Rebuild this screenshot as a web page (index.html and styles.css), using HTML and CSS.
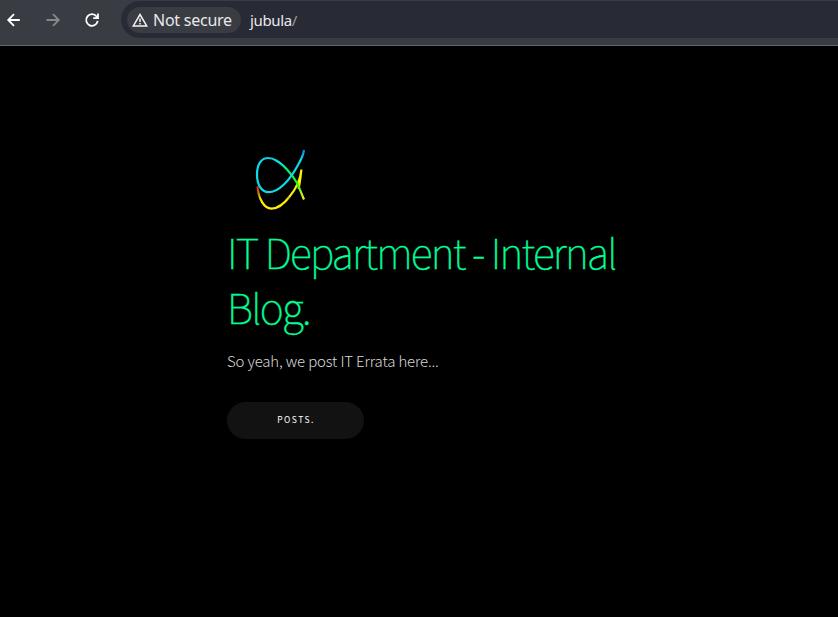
FILE: index.html
```html
<!DOCTYPE html>
<html lang="en">
<head>
<meta charset="utf-8">
<title>IT Department - Internal Blog.</title>
<link rel="stylesheet" href="styles.css">
</head>
<body>
<header class="toolbar">
  <nav class="nav">
    <svg class="icon" viewBox="0 0 16 16"><path d="M13.8 8H2.5M8 2.2 2.2 8 8 13.8"/></svg>
    <svg class="icon icon-off" viewBox="0 0 16 16"><path d="M1.5 8h12M8 2.2 13.8 8 8 13.8"/></svg>
    <svg class="icon" viewBox="0 0 16 16"><path d="M13.7 8.9A5.8 5.8 0 1 1 12.6 4.5L13.5 6M14 1.6V6.2H9.2"/></svg>
  </nav>
  <div class="address">
    <div class="chip">
      <svg class="warn" viewBox="0 0 16 14"><path d="M8 1.5 14.7 12.9H1.3Z"/><path d="M8 5.6v3.3M8 10v1.5"/></svg>
      <span class="chip-text">Not secure</span>
    </div>
    <span class="url">jubula<span class="slash">/</span></span>
  </div>
</header>
<main class="page">
  <svg class="logo" viewBox="0 0 80 80" width="80" height="80">
    <defs>
      <linearGradient id="tail" gradientUnits="userSpaceOnUse" x1="36" y1="22" x2="64" y2="58">
        <stop offset="0" stop-color="#08e5f0"/><stop offset=".25" stop-color="#00f080"/><stop offset=".65" stop-color="#18f818"/><stop offset="1" stop-color="#f4f410"/>
      </linearGradient>
      <linearGradient id="bowl" gradientUnits="userSpaceOnUse" x1="0" y1="46" x2="0" y2="60">
        <stop offset="0" stop-color="#c80c00"/><stop offset=".6" stop-color="#d88c10"/><stop offset="1" stop-color="#fff200"/>
      </linearGradient>
      <linearGradient id="tip" gradientUnits="userSpaceOnUse" x1="0" y1="8" x2="0" y2="20">
        <stop offset="0" stop-color="#1674cc"/><stop offset="1" stop-color="#08dce8"/>
      </linearGradient>
    </defs>
    <path stroke="url(#bowl)" d="M17.5 46C18.5 59 24 68.6 31.5 68.6C38 68.6 44 64 50 56"/>
    <path stroke="#fff200" d="M49.5 56.6C55 50 60.5 41 61.4 29.5M61.4 29.5C60.5 38 59.5 45 58.5 49"/>
    <path stroke="url(#tail)" d="M36 20.5C43 24 52 34 57 43C60 49 61.5 54 64 59.5"/>
    <path stroke="url(#tip)" d="M64 10C63.3 15 61 20 58 25C50 40 39 52.2 28.5 52.2C21 52.2 17 44 17 34.5C17 25 21 18 28 18C31 18 34 19 36.5 20.6"/>
  </svg>
  <h1 class="title">IT Department - Internal Blog.</h1>
  <p class="lead">So yeah, we post IT Errata here...</p>
  <a class="button" href="#">Posts.</a>
</main>
</body>
</html>
```
FILE: styles.css
```css
* { box-sizing: border-box; }
body { margin: 0; min-height: 617px; background: #000; overflow: hidden; }
.toolbar {
  display: flex;
  height: 46px;
  padding-top: 1px;
  background: #3a3c43;
  border-bottom: 1px solid #66676b;
}
.nav { display: flex; gap: 23px; width: 121px; padding: 11px 0 0 6px; }
.icon { width: 16px; height: 16px; fill: none; stroke: #fff; stroke-width: 1.8; }
.icon-off { stroke: #87888b; }
.address {
  display: flex;
  align-items: center;
  flex: 1;
  height: 37px;
  padding-left: 6px;
  border-radius: 19px 0 0 19px;
  background: #282a35;
  font: 16px/26px "Noto Sans", sans-serif;
  color: #e8e8ea;
}
.chip {
  display: flex;
  align-items: center;
  gap: 5px;
  width: 114px;
  height: 26px;
  padding-left: 5px;
  border-radius: 13px;
  background: #3a3c43;
  white-space: nowrap;
}
.chip-text { letter-spacing: -0.25px; }
.warn { width: 16px; height: 14px; fill: none; stroke: #f4f4f4; stroke-width: 1.5; }
.url { margin-left: 9px; font-size: 15px; letter-spacing: -0.35px; }
.slash { color: #9a9ba0; }
.page {
  width: 394px;
  margin-left: 227px;
  padding-top: 94px;
  font-family: "Noto Sans CJK JP", sans-serif;
}
.logo { display: block; margin-left: 13px; fill: none; stroke-width: 2.2; }
.logo path { fill: none; }
.title {
  margin: 4px 0 0;
  font-size: 41px;
  line-height: 55px;
  font-weight: 100;
  letter-spacing: -1.76px;
  color: #00ff99;
  -webkit-text-stroke: 0.4px #00ff99;
}
.lead {
  margin: 13px 0 0;
  font-size: 15px;
  line-height: 27px;
  font-weight: 300;
  letter-spacing: -0.16px;
  color: #d8d8d8;
}
.button {
  display: flex;
  align-items: center;
  justify-content: center;
  width: 137px;
  height: 37px;
  margin-top: 28px;
  padding: 0 0 3px 1px;
  border-radius: 19px;
  background: #121212;
  font-size: 8.5px;
  font-weight: 400;
  letter-spacing: 1.5px;
  text-transform: uppercase;
  text-decoration: none;
  color: #fff;
}
```
